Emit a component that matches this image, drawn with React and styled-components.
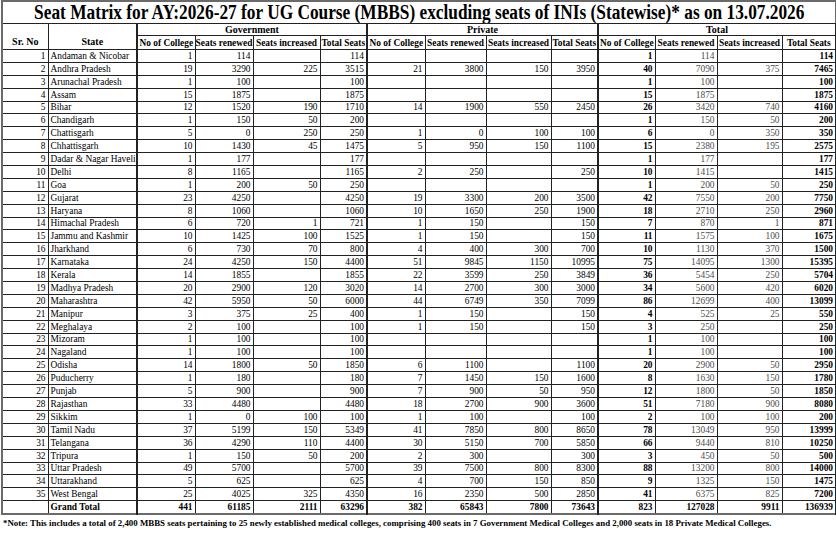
import styled, { createGlobalStyle } from "styled-components"

const GlobalStyle = createGlobalStyle`
    html, body {
        margin: 0;
        padding: 0;
        background: #fff;
    }
    body {
        font-family: "Liberation Serif", "Times New Roman", serif;
        color: #000;
    }
`

const Sheet = styled.div`
    width: 836px;
    height: 534px;
    overflow: hidden;
    padding: 0 1px;
    box-sizing: border-box;
`

const Table = styled.table`
    width: 834px;
    table-layout: fixed;
    border-collapse: collapse;
    border: 2px solid #6a6a6a;
`

const TitleCell = styled.th`
    height: 21px;
    padding: 0;
    border-bottom: 1px solid #222;
    overflow: hidden;
`

const TitleBar = styled.div`
    display: flex;
    justify-content: center;
    white-space: nowrap;
`

const TitleText = styled.span`
    flex: none;
    font-size: 20px;
    font-weight: 700;
    line-height: 21px;
    transform: scaleX(0.865);
    transform-origin: center;
`

const SideHead = styled.th`
    font-size: 10px;
    font-weight: 700;
    vertical-align: bottom;
    padding: 0 0 2px;
    border: 1px solid #222;
    border-right-width: ${p => (p.$edge ? "2px" : "1px")};
    text-align: center;
`

const GroupHead = styled.th`
    height: 11px;
    font-size: 10px;
    font-weight: 700;
    line-height: 11px;
    padding: 0;
    border: 1px solid #222;
    border-right-width: 2px;
    text-align: center;
`

const SubHead = styled.th`
    height: 13px;
    font-size: 9.4px;
    font-weight: 700;
    line-height: 12px;
    padding: 0;
    border: 1px solid #222;
    border-right-width: ${p => (p.$edge ? "2px" : "1px")};
    text-align: center;
    white-space: nowrap;
    overflow: hidden;
`

const Row = styled.tr`
    height: 12.9px;
`

const Cell = styled.td`
    font-size: 9.4px;
    line-height: 11px;
    padding: 0 2px;
    border: 1px solid #222;
    border-right-width: ${p => (p.$edge ? "2px" : "1px")};
    white-space: nowrap;
    overflow: hidden;
    vertical-align: bottom;
`

const SrCell = styled(Cell)`
    text-align: right;
`

const StateCell = styled(Cell)`
    text-align: left;
    padding: 0 0 0 2px;
    font-weight: ${p => (p.$bold ? 700 : 400)};
    border-right-width: 2px;
`

const NumCell = styled(Cell)`
    text-align: right;
    font-weight: ${p => (p.$strong ? 700 : 400)};
    color: ${p => (p.$muted ? "#4d4d4d" : "#000")};
`

const Note = styled.div`
    padding: 3px 0 0 2px;
    font-size: 8.85px;
    font-weight: 700;
    white-space: nowrap;
`

const rows = [
    ["Andaman & Nicobar", [1, 114, "", 114], ["", "", "", ""], [1, 114, "", 114]],
    ["Andhra Pradesh", [19, 3290, 225, 3515], [21, 3800, 150, 3950], [40, 7090, 375, 7465]],
    ["Arunachal Pradesh", [1, 100, "", 100], ["", "", "", ""], [1, 100, "", 100]],
    ["Assam", [15, 1875, "", 1875], ["", "", "", ""], [15, 1875, "", 1875]],
    ["Bihar", [12, 1520, 190, 1710], [14, 1900, 550, 2450], [26, 3420, 740, 4160]],
    ["Chandigarh", [1, 150, 50, 200], ["", "", "", ""], [1, 150, 50, 200]],
    ["Chattisgarh", [5, 0, 250, 250], [1, 0, 100, 100], [6, 0, 350, 350]],
    ["Chhattisgarh", [10, 1430, 45, 1475], [5, 950, 150, 1100], [15, 2380, 195, 2575]],
    ["Dadar & Nagar Haveli", [1, 177, "", 177], ["", "", "", ""], [1, 177, "", 177]],
    ["Delhi", [8, 1165, "", 1165], [2, 250, "", 250], [10, 1415, "", 1415]],
    ["Goa", [1, 200, 50, 250], ["", "", "", ""], [1, 200, 50, 250]],
    ["Gujarat", [23, 4250, "", 4250], [19, 3300, 200, 3500], [42, 7550, 200, 7750]],
    ["Haryana", [8, 1060, "", 1060], [10, 1650, 250, 1900], [18, 2710, 250, 2960]],
    ["Himachal Pradesh", [6, 720, 1, 721], [1, 150, "", 150], [7, 870, 1, 871]],
    ["Jammu and Kashmir", [10, 1425, 100, 1525], [1, 150, "", 150], [11, 1575, 100, 1675]],
    ["Jharkhand", [6, 730, 70, 800], [4, 400, 300, 700], [10, 1130, 370, 1500]],
    ["Karnataka", [24, 4250, 150, 4400], [51, 9845, 1150, 10995], [75, 14095, 1300, 15395]],
    ["Kerala", [14, 1855, "", 1855], [22, 3599, 250, 3849], [36, 5454, 250, 5704]],
    ["Madhya Pradesh", [20, 2900, 120, 3020], [14, 2700, 300, 3000], [34, 5600, 420, 6020]],
    ["Maharashtra", [42, 5950, 50, 6000], [44, 6749, 350, 7099], [86, 12699, 400, 13099]],
    ["Manipur", [3, 375, 25, 400], [1, 150, "", 150], [4, 525, 25, 550]],
    ["Meghalaya", [2, 100, "", 100], [1, 150, "", 150], [3, 250, "", 250]],
    ["Mizoram", [1, 100, "", 100], ["", "", "", ""], [1, 100, "", 100]],
    ["Nagaland", [1, 100, "", 100], ["", "", "", ""], [1, 100, "", 100]],
    ["Odisha", [14, 1800, 50, 1850], [6, 1100, "", 1100], [20, 2900, 50, 2950]],
    ["Puducherry", [1, 180, "", 180], [7, 1450, 150, 1600], [8, 1630, 150, 1780]],
    ["Punjab", [5, 900, "", 900], [7, 900, 50, 950], [12, 1800, 50, 1850]],
    ["Rajasthan", [33, 4480, "", 4480], [18, 2700, 900, 3600], [51, 7180, 900, 8080]],
    ["Sikkim", [1, 0, 100, 100], [1, 100, "", 100], [2, 100, 100, 200]],
    ["Tamil Nadu", [37, 5199, 150, 5349], [41, 7850, 800, 8650], [78, 13049, 950, 13999]],
    ["Telangana", [36, 4290, 110, 4400], [30, 5150, 700, 5850], [66, 9440, 810, 10250]],
    ["Tripura", [1, 150, 50, 200], [2, 300, "", 300], [3, 450, 50, 500]],
    ["Uttar Pradesh", [49, 5700, "", 5700], [39, 7500, 800, 8300], [88, 13200, 800, 14000]],
    ["Uttarakhand", [5, 625, "", 625], [4, 700, 150, 850], [9, 1325, 150, 1475]],
    ["West Bengal", [25, 4025, 325, 4350], [16, 2350, 500, 2850], [41, 6375, 825, 7200]],
]

const grandTotal = [[441, 61185, 2111, 63296], [382, 65843, 7800, 73643], [823, 127028, 9911, 136939]]

const widths = [46, 89, 58, 58, 67, 47, 58, 61, 65, 47, 57, 62, 65, 54]
const subLabels = ["No of College", "Seats renewed", "Seats increased", "Total Seats"]
const groups = ["Government", "Private", "Total"]

function GroupCells({ values, isTotal, allBold }) {
    return values.map((v, i) => (
        <NumCell
            key={i}
            $edge={i === 3}
            $strong={allBold || (isTotal && (i === 0 || i === 3))}
            $muted={isTotal && !allBold && (i === 1 || i === 2)}
        >
            {v}
        </NumCell>
    ))
}

function App() {
    return (
        <Sheet>
            <GlobalStyle />
            <Table>
                <colgroup>
                    {widths.map((w, i) => <col key={i} style={{ width: w }} />)}
                </colgroup>
                <thead>
                    <tr>
                        <TitleCell colSpan={14}>
                            <TitleBar>
                                <TitleText>
                                    Seat Matrix for AY:2026-27 for UG Course (MBBS) excluding seats of INIs (Statewise)* as on 13.07.2026
                                </TitleText>
                            </TitleBar>
                        </TitleCell>
                    </tr>
                    <tr>
                        <SideHead rowSpan={2}>Sr. No</SideHead>
                        <SideHead rowSpan={2} $edge>State</SideHead>
                        {groups.map(g => <GroupHead key={g} colSpan={4}>{g}</GroupHead>)}
                    </tr>
                    <tr>
                        {groups.map(g =>
                            subLabels.map((s, i) => <SubHead key={g + s} $edge={i === 3}>{s}</SubHead>)
                        )}
                    </tr>
                </thead>
                <tbody>
                    {rows.map(([state, gov, pvt, total], idx) => (
                        <Row key={state}>
                            <SrCell>{idx + 1}</SrCell>
                            <StateCell>{state}</StateCell>
                            <GroupCells values={gov} />
                            <GroupCells values={pvt} />
                            <GroupCells values={total} isTotal />
                        </Row>
                    ))}
                    <Row>
                        <SrCell />
                        <StateCell $bold>Grand Total</StateCell>
                        {grandTotal.map((g, i) => <GroupCells key={i} values={g} allBold />)}
                    </Row>
                </tbody>
            </Table>
            <Note>
                *Note: This includes a total of 2,400 MBBS seats pertaining to 25 newly established medical colleges, comprising 400 seats in 7 Government Medical Colleges and 2,000 seats in 18 Private Medical Colleges.
            </Note>
        </Sheet>
    )
}

export default App
